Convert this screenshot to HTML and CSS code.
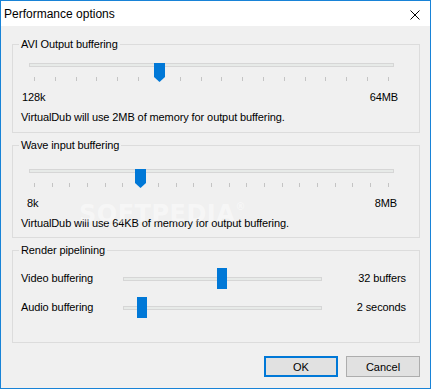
FILE: index.html
```html
<!DOCTYPE html>
<html lang="en">

<head>
    <meta charset="UTF-8" />
    <title>Performance options</title>
    <link rel="stylesheet" href="styles.css">
</head>

<body>
    <div class="window">
        <div class="titlebar">
            <span class="title">Performance options</span>
            <svg class="close" width="10" height="10" viewBox="0 0 10 10">
                <path d="M0.5 0.5 L9.5 9.5 M9.5 0.5 L0.5 9.5" stroke="#000" stroke-width="1" fill="none" />
            </svg>
        </div>

        <div class="content">
            <!-- AVI output -->
            <fieldset class="group group-avi">
                <legend>AVI Output buffering</legend>
                <div class="slider">
                    <div class="track"></div>
                    <svg class="thumb" style="left: 125px;" width="11" height="19" viewBox="0 0 11 19">
                        <path d="M0 0 H11 V14 L5.5 19 L0 14 Z" fill="#0078d7" />
                    </svg>
                    <div class="ticks" id="ticksAvi"></div>
                </div>
                <div class="range-labels">
                    <span>128k</span>
                    <span>64MB</span>
                </div>
                <p class="note">VirtualDub will use 2MB of memory for output buffering.</p>
            </fieldset>

            <!-- Wave input -->
            <fieldset class="group group-wave">
                <legend>Wave input buffering</legend>
                <div class="slider">
                    <div class="track"></div>
                    <svg class="thumb" style="left: 106px;" width="11" height="19" viewBox="0 0 11 19">
                        <path d="M0 0 H11 V14 L5.5 19 L0 14 Z" fill="#0078d7" />
                    </svg>
                    <div class="ticks" id="ticksWave"></div>
                </div>
                <div class="range-labels range-labels-wave">
                    <span>8k</span>
                    <span>8MB</span>
                </div>
                <p class="note">VirtualDub will use 64KB of memory for output buffering.</p>
            </fieldset>

            <!-- Render pipelining -->
            <fieldset class="group group-render">
                <legend>Render pipelining</legend>
                <div class="pipe-row">
                    <span class="pipe-label">Video buffering</span>
                    <div class="pipe-slider">
                        <div class="track"></div>
                        <div class="block-thumb" style="left: 94px;"></div>
                    </div>
                    <span class="pipe-value">32 buffers</span>
                </div>
                <div class="pipe-row">
                    <span class="pipe-label">Audio buffering</span>
                    <div class="pipe-slider">
                        <div class="track"></div>
                        <div class="block-thumb" style="left: 14px;"></div>
                    </div>
                    <span class="pipe-value">2 seconds</span>
                </div>
            </fieldset>

            <div class="buttons">
                <button class="btn btn-default">OK</button>
                <button class="btn">Cancel</button>
            </div>
        </div>

        <div class="watermark">SOFTPEDIA<sup>®</sup></div>
    </div>

    <script>
    function drawTicks(id, count) {
        const row = document.getElementById(id);
        for (let i = 0; i < count; i++) {
            const tick = document.createElement('span');
            tick.className = 'tick';
            row.appendChild(tick);
        }
    }

    drawTicks('ticksAvi', 18);
    drawTicks('ticksWave', 21);
    </script>
</body>

</html>
```

FILE: styles.css
```css
* {
    margin: 0;
    padding: 0;
    box-sizing: border-box;
}

body {
    background-color: #f0f0f0;
    font-family: "Liberation Sans", Arial, sans-serif;
    font-size: 11px;
    line-height: 13px;
    letter-spacing: -0.1px;
    color: #000;
}

.window {
    position: relative;
    width: 431px;
    height: 389px;
    border: 1px solid #1883d7;
    background-color: #f0f0f0;
    overflow: hidden;
}

/* Title bar */

.titlebar {
    height: 25px;
    background: #fff;
    display: flex;
    align-items: center;
    justify-content: space-between;
    padding: 0 10px 0 3px;
}

.title {
    font-family: "Liberation Sans", Arial, sans-serif;
    font-size: 12px;
    line-height: 16px;
    letter-spacing: 0;
}

.close {
    display: block;
    margin-top: 3px;
}

/* Content */

.content {
    padding: 12px 10px 0 11px;
}

.group {
    border: 1px solid #dcdcdc;
    margin-bottom: 6px;
}

.group legend {
    margin-left: 6px;
    padding: 0 2px;
    line-height: 13px;
}

.group-avi {
    padding: 6px 0 8px;
}

.group-wave {
    padding: 11px 0 7px;
}

.group-render {
    padding: 11px 0 24px;
    margin-bottom: 13px;
}

/* Sliders with ticks */

.slider {
    position: relative;
    margin: 0 25px 0 16px;
}

.track {
    height: 4px;
    background: #e7eae8;
    border: 1px solid #d6d6d6;
}

.slider .track {
    margin-top: 6px;
}

.thumb {
    position: absolute;
    top: 0;
    display: block;
}

.ticks {
    display: flex;
    justify-content: space-between;
    margin: 10px 5px 0 5px;
    height: 4px;
}

.tick {
    width: 1px;
    height: 4px;
    background: #c4c4c4;
}

.range-labels {
    display: flex;
    justify-content: space-between;
    margin: 10px 21px 0 9px;
}

.range-labels-wave {
    margin-left: 14px;
    margin-right: 22px;
}

.note {
    margin: 7px 0 0 8px;
}

/* Render pipelining rows */

.pipe-row {
    display: flex;
    align-items: center;
    height: 21px;
    margin: 0 13px 8px 8px;
}

.pipe-row:last-child {
    margin-bottom: 0;
}

.pipe-label {
    width: 102px;
}

.pipe-slider {
    position: relative;
    width: 199px;
    height: 21px;
    display: flex;
    align-items: center;
}

.pipe-slider .track {
    width: 100%;
}

.block-thumb {
    position: absolute;
    top: 0;
    width: 10px;
    height: 21px;
    background: #0078d7;
}

.pipe-value {
    flex: 1;
    text-align: right;
}

/* Buttons */

.buttons {
    display: flex;
    justify-content: flex-end;
    gap: 8px;
}

.btn {
    width: 74px;
    height: 21px;
    background: #e1e1e1;
    border: 1px solid #adadad;
    font-family: "Liberation Sans", Arial, sans-serif;
    font-size: 11px;
    color: #000;
}

.btn-default {
    border: 2px solid #0078d7;
}

.watermark {
    position: absolute;
    left: 78px;
    top: 200px;
    font-family: "DejaVu Sans", sans-serif;
    font-weight: bold;
    font-size: 24px;
    line-height: 26px;
    color: rgba(255, 255, 255, 0.45);
    letter-spacing: 0.5px;
    pointer-events: none;
}

.watermark sup {
    font-size: 10px;
    vertical-align: top;
    line-height: 12px;
}
```
